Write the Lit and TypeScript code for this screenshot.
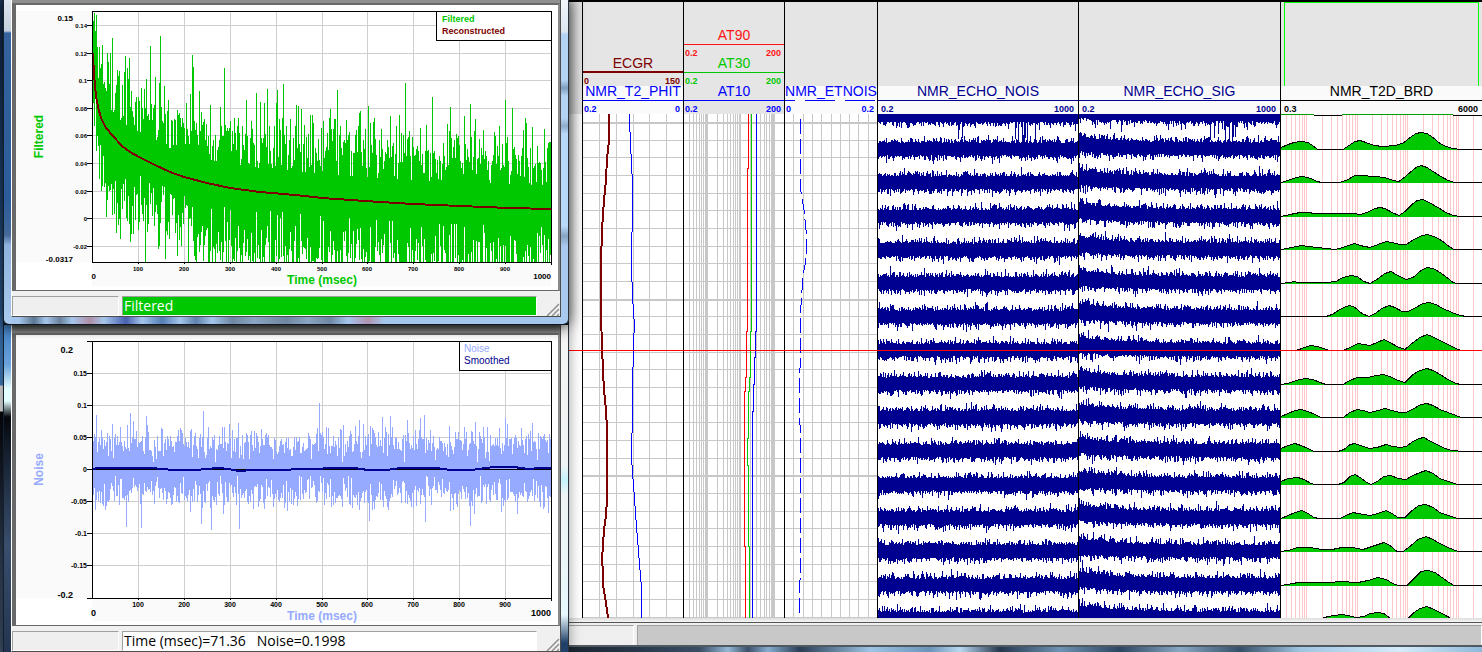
import { LitElement, html, css, svg } from "lit";
import { customElement, property } from "lit/decorators.js";
import { classMap } from "lit/directives/class-map.js";

type Point = [number, number];

/** Small deterministic generator, so that the traces look the same on each load. */
function randomSource(seed: number) {
  let s = seed >>> 0;
  return () => {
    s = (s + 0x6d2b79f5) >>> 0;
    let t = s;
    t = Math.imul(t ^ (t >>> 15), t | 1);
    t ^= t + Math.imul(t ^ (t >>> 7), t | 61);
    return ((t ^ (t >>> 14)) >>> 0) / 4294967296;
  };
}

function gaussSource(seed: number) {
  const r = randomSource(seed);
  return () => (r() + r() + r() + r() + r() + r() - 3) * 1.41;
}

const toPath = (points: Point[]) =>
  points.map(([x, y], i) => `${i ? "L" : "M"}${x} ${y}`).join("");

function interpolate(points: Point[], x: number) {
  for (let i = 1; i < points.length; i++) {
    if (x <= points[i][0]) {
      const [x0, y0] = points[i - 1];
      const [x1, y1] = points[i];
      return y0 + ((y1 - y0) * (x - x0)) / (x1 - x0);
    }
  }
  return points[points.length - 1][1];
}

/* ---------------------------------------------------------------- charts */

interface ChartSpec {
  title: string;
  height: number;
  top: number;
  bottom: number;
  yTicks: { label: string; y: number }[];
  max: string;
  min: string;
  color: string;
  bars: string;
  line: Point[];
  lineColor: string;
  legend: { text: string; color: string }[];
  legendLeft: number;
  tickSize: number;
  endSize: number;
  bold: boolean;
  zero?: number;
}

const LEFT = 76;
const RIGHT = 535;

const decay: Point[] = [
  [77, 48], [78, 70], [80, 91], [82, 102], [85, 113], [90, 123], [97, 131], [106, 141],
  [114, 147], [123, 152], [139, 160], [154, 167], [168, 172], [191, 178], [214, 183],
  [244, 187], [279, 190], [306, 193], [349, 196], [397, 199], [444, 201], [493, 203], [535, 204],
];

function filteredBars() {
  const g = gaussSource(71);
  const peaks: Record<number, number> = {
    78: 8, 80: 10, 79: 26, 81: 42, 91: 48, 96: 33, 109: 51, 113: 53, 134: 41, 144: 31, 176: 50, 177: 62,
    208: 63, 240: 88, 251: 84, 261: 85, 267: 79, 321: 85, 352: 101, 389: 78, 416: 92, 434: 102, 454: 99,
    489: 95, 496: 103,
  };
  let d = "";
  for (let x = LEFT + 1; x < RIGHT; x++) {
    const mid = interpolate(decay, x);
    const early = Math.min(1, 0.75 + (x - LEFT) / 150);
    const up = Math.min(90, Math.max(24, 53 + 19 * g()));
    const down = Math.max(18, 58 + 22 * g()) * early;
    const y0 = peaks[x] ?? Math.max(x < 90 ? 16 : 48, mid - up * (x < 90 ? 0.9 : 1));
    const y1 = Math.min(257, mid + down);
    d += `M${x} ${Math.round(y0)}V${Math.round(y1)}`;
  }
  return d;
}

function noiseBars() {
  const g = gaussSource(1998);
  const peaks: Record<number, number> = {
    80: 80, 96: 89, 114: 78, 130: 81, 187: 76, 303: 68, 408: 80, 459: 87, 489: 83, 516: 88,
  };
  const dips: Record<number, number> = { 110: 192, 125: 193, 185: 189, 195: 195, 223: 194, 353: 186, 409: 187, 454: 191 };
  let d = "";
  for (let x = LEFT + 1; x < RIGHT; x++) {
    const y0 = peaks[x] ?? 134 - Math.max(7, 26 + 9 * g());
    const y1 = dips[x] ?? 134 + Math.max(7, 25 + 9 * g());
    d += `M${x} ${Math.round(y0)}V${Math.round(y1)}`;
  }
  return d;
}

const filteredChart: ChartSpec = {
  title: "Filtered",
  height: 283,
  top: 6,
  bottom: 257,
  yTicks: ["0.14", "0.12", "0.1", "0.08", "0.06", "0.04", "0.02", "0", "-0.02"].map((label, i) => ({
    label,
    y: Math.round(20 + i * 27.6),
  })),
  max: "0.15",
  min: "-0.0317",
  color: "#00c800",
  bars: filteredBars(),
  line: decay,
  lineColor: "#7d0000",
  legend: [
    { text: "Filtered", color: "#00c800" },
    { text: "Reconstructed", color: "#7d0000" },
  ],
  legendLeft: 420,
  tickSize: 6,
  endSize: 8,
  bold: true,
};

const noiseChart: ChartSpec = {
  title: "Noise",
  height: 288,
  top: 6,
  bottom: 263,
  yTicks: ["0.15", "0.1", "0.05", "0", "-0.05", "-0.1", "-0.15"].map((label, i) => ({
    label,
    y: 38 + i * 32,
  })),
  max: "0.2",
  min: "-0.2",
  color: "#96aaff",
  bars: noiseBars(),
  line: [
    [77, 134], [82, 133], [136, 133], [145, 134], [158, 135], [180, 135], [190, 134], [203, 133], [213, 134],
    [222, 136], [238, 135], [255, 135], [295, 134], [320, 133], [338, 133], [352, 135], [370, 135], [385, 133],
    [420, 133], [435, 135], [455, 135], [478, 132], [498, 132], [512, 134], [525, 133], [535, 133],
  ],
  lineColor: "#000090",
  legend: [
    { text: "Noise", color: "#96aaff" },
    { text: "Smoothed", color: "#000090" },
  ],
  legendLeft: 443,
  tickSize: 7,
  endSize: 9,
  bold: false,
  zero: 134,
};

@customElement("echo-chart")
export class EchoChart extends LitElement {
  @property({ attribute: false }) spec!: ChartSpec;

  static styles = css`
    :host { display: block; background: #fff; }
    svg { display: block; width: 100%; height: auto; overflow: visible; font-family: "Liberation Sans", Arial, sans-serif; }
    .crisp { shape-rendering: crispEdges; }
    .end { text-anchor: end; }
    .mid { text-anchor: middle; }
    .bold { font-weight: 700; }
    .axis-title { font-size: 12px; font-weight: 700; text-anchor: middle; }
    .legend { font-size: 10px; }
    .legend.bold { font-size: 9px; }
  `;

  render() {
    const c = this.spec;
    const xs = [1, 2, 3, 4, 5, 6, 7, 8, 9].map((n) => ({ n, x: Math.round(LEFT + n * 45.9) }));
    const middle = (c.top + c.bottom) / 2;
    const endBase = c.bottom + (c.bold ? 17 : 18);
    return html`<svg viewBox="0 0 541 ${c.height}" role="img" aria-label="${c.title} against time">
      <g class="crisp">
        <rect x="0" y=${c.top} width=${LEFT} height=${c.bottom - c.top} fill="#fafafa"></rect>
        <rect x=${LEFT} y=${c.bottom} width="459" height=${c.height - c.bottom - 2} fill="#fafafa"></rect>
        <g stroke="#cfcfcf" fill="none">
          ${xs.map(({ x }) => svg`<path d="M${x}.5 ${c.top}V${c.bottom}"></path>`)}
          ${c.yTicks.map(({ y }) => svg`<path d="M${LEFT} ${y}.5H${RIGHT}"></path>`)}
        </g>
        <path d=${c.bars} transform="translate(.5 0)" stroke=${c.color} fill="none"></path>
        ${c.zero ? svg`<path d="M${LEFT} ${c.zero}.5H${RIGHT}" stroke="#000"></path>` : null}
        <path d=${toPath(c.line)} stroke=${c.lineColor} stroke-width="2" fill="none"></path>
        <g stroke="#000" fill="none">
          <path d="M${LEFT}.5 ${c.top}.5H${RIGHT}.5V${c.bottom}.5H${LEFT}.5Z"></path>
          ${c.yTicks.map(({ y }) => svg`<path d="M${LEFT - 5} ${y}.5H${LEFT}"></path>`)}
          ${xs.map(({ x }) => svg`<path d="M${x}.5 ${c.bottom}v2"></path>`)}
          <path d="M${RIGHT}.5 ${c.bottom}v3"></path>
          ${c.zero ? svg`<path d="M${LEFT - 5} ${c.top}.5h5M${LEFT - 5} ${c.bottom}.5h5"></path>` : null}
        </g>
        <rect x="${c.legendLeft}.5" y="${c.top}.5" width=${RIGHT - c.legendLeft} height="29" fill="#fff" stroke="#000"></rect>
      </g>
      ${c.legend.map(
        (l, i) => svg`<text class=${c.bold ? "legend bold" : "legend"} x=${c.bold ? 426 : 448} y=${c.top + 11 + i * 12}
          fill=${l.color}>${l.text}</text>`
      )}
      <g class="bold end" font-size=${c.tickSize}>
        ${c.yTicks.map(({ label, y }) => svg`<text x=${LEFT - 5} y=${y + 3}>${label}</text>`)}
      </g>
      <g class="bold mid" font-size=${c.tickSize}>
        ${xs.map(({ n, x }) => svg`<text x=${x} y=${c.bottom + 9}>${n * 100}</text>`)}
      </g>
      <g class="bold end" font-size=${c.endSize}>
        <text x="57" y=${c.top + (c.bold ? 10 : 12)}>${c.max}</text>
        <text x="57" y=${c.bottom}>${c.min}</text>
        <text x="80" y=${endBase}>0</text>
        <text x=${RIGHT} y=${endBase}>1000</text>
      </g>
      <text class="axis-title" fill=${c.color} x="306" y=${c.bottom + 22}>Time (msec)</text>
      <text class="axis-title" fill=${c.color} transform="translate(27 ${middle}) rotate(-90)">${c.title}</text>
    </svg>`;
  }
}

@customElement("chart-window")
export class ChartWindow extends LitElement {
  @property({ attribute: false }) spec!: ChartSpec;
  @property() status = "";
  @property({ type: Boolean, reflect: true }) active = false;

  static styles = css`
    :host {
      display: block; box-sizing: border-box; position: relative;
      padding: 0 7px; border-left: 1px solid #14202e; border-right: 1px solid #2a3138;
      background:
        linear-gradient(#3f7fc4 0, #6ba3dc 40px, #e4ffff 64px, #e4ffff 76px, #05080c 92px, #1a2638 140px, #3a4f6c 220px, #223450 100%) left / 8px 100% no-repeat,
        linear-gradient(#f4f4f4 0, #f0f4f4 140px, #c4f4fc 155px, #f0f4f4 170px, #e8f8fc 290px, #20406a 318px) right / 8px 100% no-repeat;
      box-shadow: 0 0 12px #00000066;
    }
    :host([active]) {
      z-index: 1; padding-bottom: 7px; border-bottom: 1px solid #101820; border-radius: 0 0 6px 6px;
      background:
        linear-gradient(#dfe7f0 0, #c3cfdc 31px, #34639e 33px, #2c5c9a 200px, #44699a 235px, #8db2dd 245px, #a9c9ee 320px) left / 8px 100% no-repeat,
        linear-gradient(#f2f6fa 0, #dde6f0 32px, #b4d2f4 34px, #b4d2f4 80px, #7f9dbe 88px, #b4d2f4 96px, #b4d2f4 118px, #8fabc9 126px, #b9d9fb 134px, #b9d9fb 226px, #86a3c2 236px, #a9c9ee 246px) right / 8px 100% no-repeat,
        linear-gradient(to right, #a5c6ec 15px, #5e7690 30px, #a5c6ec 42px, #6a819b 56px, #a5c6ec 68px, #b08fa8 86px, #a5c6ec 100px, #4a5fae 122px, #a5c6ec 138px, #557fb5 158px, #a5c6ec 176px, #5f83ad 192px, #a5c6ec 208px, #6f87a2 228px, #8ba5c2 250px, #6f87a2 282px, #8ba5c2 304px, #6f87a2 326px, #a5c6ec 344px, #b094b0 364px, #a5c6ec 380px);
      box-shadow: 0 0 14px 2px #000000cc;
    }
    .client { border: 1px solid #4c4c4c; border-top: 0; border-left-color: #fff; background: #f0f0f0; }
    .rim { height: 3px; background: #8f8f8f; }
    .toolbar { height: 8px; background: linear-gradient(#565a56, #8d8d8d); }
    .panel { border: 2px solid #696969; border-left-width: 4px; border-right-color: #8a8a8a; border-bottom: 1px solid #696969; padding: 0 1px 2px 0; background: #fff; }
    .statusbar {
      display: grid; grid-template-columns: 107px 1fr 20px; gap: 3px; padding: 5px 0 0; align-items: stretch;
      font: 14px/18px "Open Sans", "Noto Sans", sans-serif; color: #000;
    }
    .cell { border: 1px solid #a0a0a0; border-right-color: #fff; border-bottom-color: #fff; background: #efefef; }
    .value { background: #fff; padding-left: 1px; height: 18px; white-space: pre; }
    .highlight { background: #00c800; color: #fff; }
    .grip { align-self: end; justify-self: end; width: 15px; height: 14px; }
  `;

  render() {
    return html`
      <section class="client" aria-label=${this.spec.title}>
        <div class=${this.active ? "rim" : "toolbar"}></div>
        <div class="panel"><echo-chart .spec=${this.spec}></echo-chart></div>
        <footer class="statusbar">
          <span class="cell"></span>
          <output class=${classMap({ cell: true, value: true, highlight: this.active })}>${this.status}</output>
          <svg class="grip" viewBox="0 0 15 14" aria-hidden="true">
            <path d="M2 14L14 2M7 14L14 7M12 14L14 12" stroke="#909090" stroke-width="1.5"></path>
          </svg>
        </footer>
      </section>`;
  }
}

/* ---------------------------------------------------------------- well log */

interface Curve {
  name: string;
  from: string;
  to: string;
  color: string;
  thick?: boolean;
  dashed?: boolean;
}

interface Track {
  width: number;
  curves: Curve[];
  shaded?: boolean;
  framed?: boolean;
  body: () => unknown;
}

const LOG_HEIGHT = 504;

function depthGrid(width: number) {
  return Array.from({ length: 29 }, (_, k) => {
    const y = Math.round(8 + k * 17.67);
    return svg`<rect x="0" y=${y} width=${width} height=${k % 10 === 0 ? 2 : 1} fill="#c8c8c8"></rect>`;
  });
}

function linearGrid(width: number, divisions: number) {
  return Array.from({ length: divisions - 1 }, (_, k) => {
    const x = Math.round(((k + 1) * width) / divisions);
    return svg`<rect x=${x} y="0" width="1" height=${LOG_HEIGHT} fill="#c8c8c8"></rect>`;
  });
}

function logGrid(start: number, decade: number, width: number, color: string, heavy: boolean) {
  const lines = [];
  for (let e = -1; e < 5; e++) {
    for (let m = 1; m < 10; m++) {
      const x = Math.round(decade * (Math.log10(m) + e - Math.log10(start)));
      if (x > 0 && x < width) {
        lines.push(svg`<rect x=${heavy && m === 1 ? x - 1 : x} y="0" width=${heavy && m === 1 ? 2 : 1} height=${LOG_HEIGHT} fill=${color}></rect>`);
      }
    }
  }
  return lines;
}

const steps = (points: Point[]) =>
  points.map(([x, y], i) => (i ? `H${x}.5V${y}` : `M${x}.5 ${y}`)).join("");

const ecgr: Point[] = [
  [27, 0], [27, 27], [25, 44], [24, 66], [22, 86], [20, 116], [19, 149], [19, 203], [20, 231], [21, 258], [22, 276],
  [24, 296], [25, 316], [25, 386], [24, 401], [22, 416], [21, 431], [20, 445], [21, 458], [21, 471], [23, 483],
  [25, 496], [26, 504],
];
const phit: Point[] = [
  [47, 0], [48, 18], [49, 40], [50, 60], [50, 118], [49, 122], [49, 152], [50, 168], [51, 190], [52, 205], [52, 219],
  [51, 222], [51, 253], [50, 256], [50, 319], [49, 322], [49, 344], [50, 351], [52, 378], [54, 406], [56, 431],
  [58, 456], [59, 468], [59, 504],
];
const etnois: Point[] = [
  [16, 5], [16, 71], [18, 84], [20, 96], [22, 116], [23, 134], [21, 151], [19, 161], [18, 176], [17, 191], [16, 201],
  [16, 254], [15, 261], [15, 306], [16, 311], [16, 466], [15, 471], [15, 504],
];

function echoBands(width: number, seed: number, signal: boolean) {
  const g = gaussSource(seed);
  const r = randomSource(seed + 9);
  let d = "";
  for (let row = 0; row < 16; row++) {
    const center = 1.6 + row * 33.53;
    for (let x = 1; x < width; x++) {
      const lift = signal ? 3.5 * Math.exp(-x / 30) + 2 * Math.exp(-x / 90) : 0;
      const gain = signal ? 1 + 0.2 * Math.exp(-x / 30) : 1;
      const up = (6 + Math.abs(g()) * 3.2) * gain;
      let down = (6 + Math.abs(g()) * 3.2) * gain;
      if (row === 0 && x > 35) {
        const burst = Math.abs(x - 146) < 14 ? 0.2 : 0.02;
        if (r() < burst) down += 8 + r() * 12;
      }
      const y0 = Math.max(0, Math.round(center - up - lift));
      const y1 = Math.min(LOG_HEIGHT, Math.round(center + down - lift));
      if (y0 < LOG_HEIGHT) d += `M${x}.5 ${y0}V${y1}`;
    }
  }
  return d;
}

/* Each row holds x, amplitude pairs of one T2 distribution. */
const distributions: number[][] = [
  [1,2,8,5,14,7,21,8,28,7,34,3,38,0,63,0,69,4,75,8,80,9,86,7,94,4,103,3,116,4,124,7,130,12,136,16,141,17,147,16,153,12,160,6,166,3,173,1,181,0],
  [1,0,8,2,16,5,23,6,31,4,37,1,42,0,60,0,68,3,75,7,80,7,95,6,105,5,113,2,119,1,123,4,130,10,136,15,141,17,147,15,153,11,161,6,168,2,175,0],
  [1,0,10,2,20,4,30,4,33,3,73,3,80,2,87,4,95,8,100,9,105,8,112,4,119,1,125,5,132,12,137,16,143,17,149,14,158,9,166,4,173,1,181,0],
  [1,0,12,2,21,4,28,3,38,2,46,1,55,0,60,1,68,4,75,6,80,4,90,2,98,5,106,8,112,7,120,5,126,5,134,10,142,14,148,15,156,12,163,8,169,3,174,0],
  [1,0,10,1,14,2,18,1,46,1,56,2,63,6,71,8,77,7,84,2,90,0,97,4,105,10,111,12,118,8,126,4,133,6,141,13,147,16,153,15,160,11,167,6,173,1,177,0],
  [1,0,46,0,52,2,60,7,66,10,70,11,75,9,82,3,89,0,95,3,102,8,109,11,115,9,122,5,128,5,136,9,143,13,149,14,156,12,163,8,172,4,180,1,187,0],
  [1,0,16,0,22,2,30,5,38,4,46,1,50,0,63,0,70,3,78,7,84,6,90,5,97,8,104,11,110,8,117,4,125,1,133,8,140,13,147,16,152,14,160,10,168,6,176,2,181,0],
  [1,0,8,1,16,4,25,6,33,5,40,2,46,0,63,0,70,4,77,7,88,7,96,9,104,10,112,7,118,4,125,2,133,10,140,14,147,16,153,14,160,10,168,5,176,1,181,0],
  [1,1,8,4,15,7,21,8,28,6,35,3,41,0,63,0,70,5,77,8,83,7,90,5,98,7,105,9,112,7,120,5,126,5,134,9,141,13,147,14,153,12,160,8,168,5,176,2,181,0],
  [1,3,8,6,15,8,21,6,28,3,34,0,58,0,64,2,70,7,75,8,80,6,90,3,97,4,106,7,113,5,120,4,126,5,133,10,139,13,144,14,149,11,155,8,163,4,171,1,185,0],
  [1,3,8,6,18,7,24,5,31,1,35,0,58,0,64,2,70,8,75,10,80,7,87,2,91,0,97,3,104,8,111,9,118,6,126,5,133,9,140,12,146,14,153,11,160,6,168,3,178,0],
  [1,0,8,3,15,6,22,8,28,5,34,1,39,0,60,0,66,3,73,6,78,5,90,3,98,5,106,8,112,5,118,1,125,1,132,8,139,13,146,14,153,11,160,6,168,3,178,0],
  [1,0,8,1,18,4,30,4,42,2,52,2,62,4,72,4,83,2,92,5,98,7,104,9,110,6,117,0,123,0,130,5,138,12,146,15,153,12,160,8,168,4,178,0],
  [1,0,8,1,18,3,50,3,60,4,78,3,88,5,98,8,106,6,113,2,118,0,127,0,134,7,141,14,148,15,155,13,162,8,169,3,174,0],
  [1,0,39,0,48,3,55,4,62,5,68,4,76,2,84,3,90,6,98,7,104,6,109,2,112,0,127,0,134,7,140,11,147,13,154,10,162,6,173,0],
];

function distributionRows() {
  return distributions.map((row, k) => {
    const base = Math.round(34.6 + k * 33.57);
    const points: Point[] = [];
    for (let i = 0; i < row.length; i += 2) points.push([row[i], base - row[i + 1]]);
    points.push([202, base]);
    const line = toPath(points.map(([x, y]) => [x, y + 0.5]));
    return svg`<path d="${toPath(points)}V${base + 1}H1Z" fill="#00c800"></path>
      <path d=${line} fill="none" stroke="#000"></path>`;
  });
}

const NAVY = "#000090";

const tracks: Track[] = [
  {
    width: 101,
    curves: [
      { name: "ECGR", from: "0", to: "150", color: "#7d0000", thick: true },
      { name: "NMR_T2_PHIT", from: "0.2", to: "0", color: "#0000ff" },
    ],
    body: () => svg`${linearGrid(101, 6)}${depthGrid(101)}
      <path d=${toPath(ecgr)} fill="none" stroke="#7d0000" stroke-width="2"></path>
      <path d=${toPath(phit)} fill="none" stroke="#0000ff"></path>`,
  },
  {
    width: 101,
    shaded: true,
    curves: [
      { name: "AT90", from: "0.2", to: "200", color: "#ff1414" },
      { name: "AT30", from: "0.2", to: "200", color: "#00c800" },
      { name: "AT10", from: "0.2", to: "200", color: "#0000ff" },
    ],
    body: () => svg`${logGrid(0.2, 33.67, 101, "#c8c8c8", true)}${depthGrid(101)}
      <g fill="none">
        <path d=${steps([[65, 0], [65, 54], [64, 217], [63, 263], [62, 277], [61, 432], [62, 504]])} stroke="#ff0000"></path>
        <path d=${steps([[68, 0], [68, 217], [67, 263], [66, 277], [65, 324], [64, 351], [65, 432], [66, 504]])} stroke="#00c800"></path>
        <path d=${steps([[73, 0], [73, 217], [72, 243], [71, 270], [70, 297], [69, 504]])} stroke="#0000ff"></path>
      </g>`,
  },
  {
    width: 93,
    curves: [{ name: "NMR_ETNOIS", from: "0", to: "0.2", color: "#0000ff", dashed: true }],
    body: () => svg`${linearGrid(93, 10)}${depthGrid(93)}
      <path d=${toPath(etnois)} fill="none" stroke="#0000ff" stroke-dasharray="15 5"></path>`,
  },
  {
    width: 201,
    curves: [{ name: "NMR_ECHO_NOIS", from: "0.2", to: "1000", color: NAVY }],
    body: () => svg`<path d=${echoBands(201, 11, false)} stroke=${NAVY} fill="none"></path>`,
  },
  {
    width: 202,
    curves: [{ name: "NMR_ECHO_SIG", from: "0.2", to: "1000", color: NAVY }],
    body: () => svg`<path d=${echoBands(202, 42, true)} stroke=${NAVY} fill="none"></path>`,
  },
  {
    width: 202,
    framed: true,
    curves: [{ name: "NMR_T2D_BRD", from: "0.3", to: "6000", color: "#000000" }],
    body: () => svg`${logGrid(0.3, 50.5, 202, "#ffc8c8", false)}
      <path d="M1 .5H34M62 .5H173" stroke="#00a000"></path>
      <path d="M34 1.5H62M173 1.5H202" stroke="#000"></path>
      ${distributionRows()}`,
  },
];

@customElement("well-log")
export class WellLog extends LitElement {
  @property({ type: Number }) cursor = 236;

  static styles = css`
    :host { display: flex; flex-direction: column; background: #fff; border-top: 2px solid #000; font-family: "Liberation Sans", Arial, sans-serif; }
    .columns { display: grid; grid-template-columns: minmax(0, 101fr) minmax(0, 101fr) minmax(0, 93fr) minmax(0, 201fr) minmax(0, 202fr) minmax(0, 202fr); padding-left: 13px; }
    .heads { background: linear-gradient(to right, #e5e5e5 13px, transparent 13px); }
    .head { display: flex; flex-direction: column; height: 112px; border-left: 1px solid #000; background: #e5e5e5; }
    .frame { flex: 1; }
    .framed .frame { margin: 0 3px; border: 1px solid #00ff00; border-bottom: 0; }
    .curve { height: 28px; background: #fafafa; color: var(--curve); }
    .shaded .curve, .curve.thick { background: #e5e5e5; }
    .name { height: 14px; font-size: 14px; line-height: 11px; text-align: center; white-space: nowrap; }
    .rule { height: 1px; background: var(--curve); }
    .thick .name { height: 13px; }
    .thick .rule { height: 2px; }
    .dashed .rule { background: repeating-linear-gradient(to right, var(--curve) 0 10px, transparent 10px 20px, var(--curve) 20px 40px); }
    .scale { display: flex; justify-content: space-between; padding: 4px 3px 0 1px; font-size: 9px; font-weight: 700; line-height: 9px; }
    .wide .scale { padding-left: 3px; padding-right: 4px; }
    .plots { position: relative; }
    .plot { border-left: 1px solid #000; }
    .plot svg { display: block; width: 100%; height: 504px; shape-rendering: crispEdges; }
    .cursor { position: absolute; left: 0; right: 0; height: 1px; background: #ff0000; }
    .edge { height: 4px; border-bottom: 1px solid #555; background: linear-gradient(#dcdcdc, #f6f6f6); }
    .statusbar { display: grid; grid-template-columns: 65px 1fr; gap: 3px; padding: 2px 0 0; background: #f0f0f0; border-bottom: 2px solid #505860; }
    .cell { height: 19px; border-top: 1px solid #a0a0a0; background: #efefef; border-right: 1px solid #fff; }
    .fill { background: #c8c8c8; border-left: 1px solid #a0a0a0; }
  `;

  render() {
    return html`
      <div class="columns heads">
        ${tracks.map(
          (t) => html`<header class=${classMap({ head: true, shaded: !!t.shaded, framed: !!t.framed, wide: t.width > 150 })}>
            <div class="frame"></div>
            ${t.curves.map(
              (c) => html`<div class=${classMap({ curve: true, thick: !!c.thick, dashed: !!c.dashed })} style="--curve:${c.color}">
                <div class="name">${c.name}</div>
                <div class="rule"></div>
                <div class="scale"><span>${c.from}</span><span>${c.to}</span></div>
              </div>`
            )}
          </header>`
        )}
      </div>
      <div class="columns plots">
        ${tracks.map(
          (t) => html`<div class="plot">
            <svg viewBox="1 0 ${t.width - 1} ${LOG_HEIGHT}" preserveAspectRatio="none" role="img"
              aria-label=${t.curves.map((c) => c.name).join(", ")}>${t.body()}</svg>
          </div>`
        )}
        <div class="cursor" style="top:${this.cursor}px"></div>
      </div>
      <div class="edge"></div>
      <footer class="statusbar"><span class="cell"></span><span class="cell fill"></span></footer>`;
  }
}

/* ---------------------------------------------------------------- desktop */

@customElement("app-root")
export class AppRoot extends LitElement {
  static styles = css`
    :host {
      display: grid; grid-template-columns: 566px minmax(0, 1fr); align-items: start; box-sizing: border-box;
      min-height: 100vh; padding-left: 3px; overflow: hidden;
      background:
        linear-gradient(#1d3c66 0, #16325a 30px, #2a5a94 240px, #3f7ab8 385px, #d8d8d8 386px, #d8d8d8 411px, #04060a 412px, #2c3b52 560px, #3a4a60 652px) left / 3px 652px no-repeat,
        linear-gradient(to right, #1a2430 566px, #28394c 640px, #3a4e66 700px, #93b8d6 728px, #3c5068 748px, #86acd0 768px, #2a3e55 800px, #9dc4e4 870px, #6c94b8 930px, #b8d8f0 960px, #24384f 1000px, #6f93b4 1060px, #2c4560 1120px, #88a8c4 1180px, #354f68 1240px, #9fc4e2 1300px, #d4ecfa 1400px, #8fb8da 1482px);
    }
    .windows { display: flex; flex-direction: column; position: relative; z-index: 1; }
  `;

  render() {
    return html`
      <div class="windows">
        <chart-window active .spec=${filteredChart} status="Filtered"></chart-window>
        <chart-window .spec=${noiseChart} status="Time (msec)=71.36   Noise=0.1998"></chart-window>
      </div>
      <well-log></well-log>`;
  }
}
